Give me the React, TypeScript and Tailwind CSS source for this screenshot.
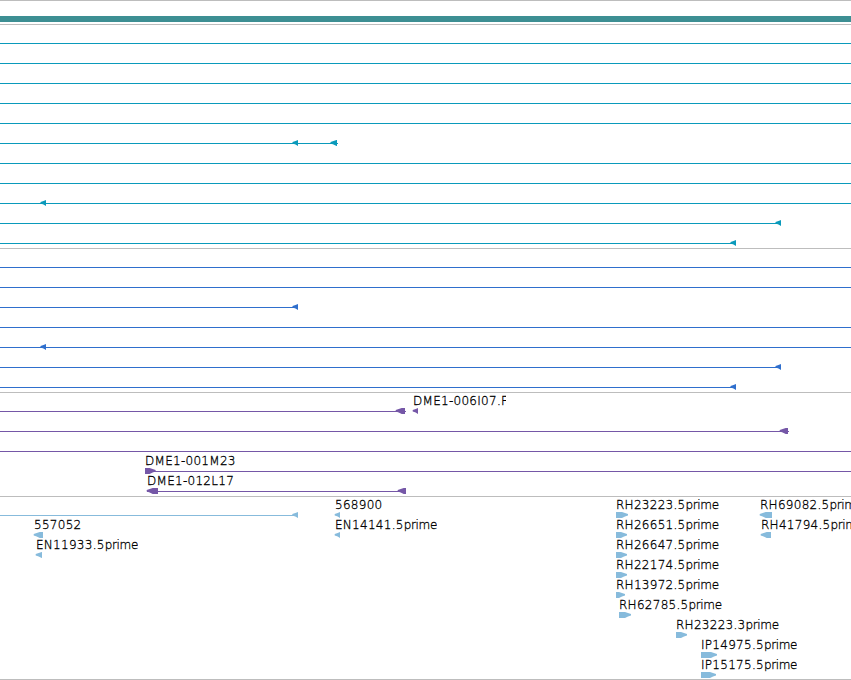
interface Glyph {
  start: number;
  end: number;
  dir: "left" | "right";
}

interface Label {
  x: number;
  text: string;
  clip?: string;
}

interface Row {
  line?: [number, number];
  glyphs?: Glyph[];
  labels?: Label[];
}

const WIDTH = 851;

const full: Row = { line: [0, WIDTH] };

const left = (start: number, end: number): Glyph => ({ start, end, dir: "left" });
const right = (start: number, end: number): Glyph => ({ start, end, dir: "right" });

const cyanRows: Row[] = [
  full,
  full,
  full,
  full,
  full,
  { line: [0, 338], glyphs: [left(292.5, 298), left(330.5, 337)] },
  full,
  full,
  { line: [0, WIDTH], glyphs: [left(40.5, 46)] },
  { line: [0, 781], glyphs: [left(775.5, 781)] },
  { line: [0, 736], glyphs: [left(730.5, 736)] },
];

const blueRows: Row[] = [
  full,
  full,
  { line: [0, 298], glyphs: [left(292.5, 298)] },
  full,
  { line: [0, WIDTH], glyphs: [left(40.5, 46)] },
  { line: [0, 781], glyphs: [left(775.5, 781)] },
  { line: [0, 736], glyphs: [left(730.5, 736)] },
];

const purpleRows: Row[] = [
  {
    line: [0, 406],
    glyphs: [left(395.7, 405), left(412.7, 418)],
    labels: [{ x: 413, text: "DME1-006I07.F", clip: "w-[93px]" }],
  },
  { line: [0, 789], glyphs: [left(779.7, 788)] },
  full,
  { line: [145, WIDTH], glyphs: [right(145, 155.6)], labels: [{ x: 145, text: "DME1-001M23" }] },
  {
    line: [147, 406],
    glyphs: [left(146.7, 158), left(397.7, 406)],
    labels: [{ x: 147, text: "DME1-012L17" }],
  },
];

const estRows: Row[] = [
  {
    line: [0, 298],
    glyphs: [left(292.3, 298), left(334.7, 340), right(616, 628), left(759.7, 772)],
    labels: [
      { x: 335, text: "568900" },
      { x: 616, text: "RH23223.5prime" },
      { x: 760, text: "RH69082.5prime" },
    ],
  },
  {
    glyphs: [left(33.7, 43), left(334.7, 340), right(616, 627), left(760.7, 771)],
    labels: [
      { x: 34, text: "557052" },
      { x: 335, text: "EN14141.5prime" },
      { x: 616, text: "RH26651.5prime" },
      { x: 761, text: "RH41794.5prime" },
    ],
  },
  {
    glyphs: [left(35.7, 42), right(616, 627)],
    labels: [
      { x: 36, text: "EN11933.5prime" },
      { x: 616, text: "RH26647.5prime" },
    ],
  },
  { glyphs: [right(616, 627)], labels: [{ x: 616, text: "RH22174.5prime" }] },
  { glyphs: [right(616, 625)], labels: [{ x: 616, text: "RH13972.5prime" }] },
  { glyphs: [right(619, 631)], labels: [{ x: 619, text: "RH62785.5prime" }] },
  { glyphs: [right(676, 687)], labels: [{ x: 676, text: "RH23223.3prime" }] },
  { glyphs: [right(701, 717)], labels: [{ x: 701, text: "IP14975.5prime" }] },
  { glyphs: [right(701, 716)], labels: [{ x: 701, text: "IP15175.5prime" }] },
];

// Arrow body is 6px tall around the connector line, with a slightly blunt end
function arrowPoints({ start, end, dir }: Glyph) {
  const head = Math.min(end - start, 6);
  const [tip, tail, s] = dir === "left" ? [start, end, 1] : [end, start, -1];
  const neck = tip + s * head;
  const mid = tip + s * 3;
  return `${tip},15 ${mid},14 ${neck},13 ${tail},13 ${tail},19 ${neck},19 ${mid},17.5 ${tip},16.5`;
}

function FeatureLabel({ label }: { label: Label }) {
  const [, id, suffix] = label.text.match(/^(.*?)(prime)?$/)!;
  return (
    <span
      className={`absolute -top-px overflow-hidden whitespace-nowrap text-[12px] font-extralight leading-[15px] tracking-[0.28px] text-black [-webkit-text-stroke:0.3px_black] ${label.clip ?? ""}`}
      style={{ left: label.x }}
    >
      {id}
      {suffix && <span className="tracking-[-0.35px]">{suffix}</span>}
    </span>
  );
}

function FeatureRow({ row }: { row: Row }) {
  return (
    <div className="relative h-5 w-full overflow-hidden">
      <svg width={WIDTH} height={20} className="block">
        {row.line && (
          <rect x={row.line[0]} y={16} width={row.line[1] - row.line[0]} height={1} fill="currentColor" />
        )}
        {row.glyphs?.map((g) => (
          <polygon key={g.start} points={arrowPoints(g)} fill="currentColor" />
        ))}
      </svg>
      {row.labels?.map((l) => (
        <FeatureLabel key={l.x} label={l} />
      ))}
    </div>
  );
}

function Track({ rows, className }: { rows: Row[]; className: string }) {
  return (
    <section className={`border-b border-[#bdbdbd] pt-0.5 ${className}`}>
      {rows.map((row, i) => (
        <FeatureRow key={i} row={row} />
      ))}
    </section>
  );
}

export default function App() {
  return (
    <main className="h-[680px] w-[851px] overflow-hidden bg-white font-['DejaVu_Sans',sans-serif]">
      <header className="h-[25px] border-y border-[#bdbdbd] pt-[15px]">
        <div className="h-1.5 bg-[#3d8f93]" />
      </header>
      <Track rows={cyanRows} className="pb-px text-[#0a9abb]" />
      <Track rows={blueRows} className="pb-px text-[#2f6fcd]" />
      <Track rows={purpleRows} className="pb-px text-[#7557a7]" />
      <Track rows={estRows} className="text-[#87bbdc]" />
    </main>
  );
}
